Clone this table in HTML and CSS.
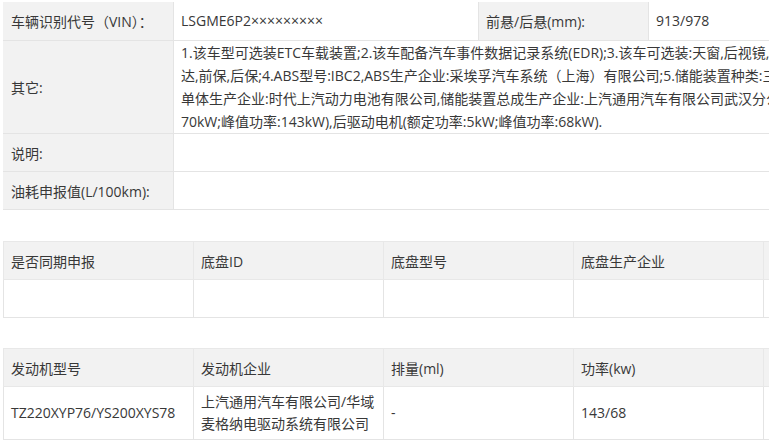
FILE: index.html
```html
<!DOCTYPE html>
<html lang="zh-CN">
<head>
<meta charset="utf-8">
<title>车辆参数</title>
<link rel="stylesheet" href="styles.css">
</head>
<body>
<div class="page">
  <table class="info">
    <colgroup>
      <col class="c-label"><col class="c-val"><col class="c-label"><col class="c-val2">
    </colgroup>
    <tr class="r38">
      <th>车辆识别代号（VIN）：</th>
      <td>LSGME6P2×××××××××</td>
      <th>前悬/后悬(mm):</th>
      <td>913/978</td>
    </tr>
    <tr>
      <th>其它:</th>
      <td colspan="3" class="multi">
        <span class="line">1.该车型可选装ETC车载装置;2.该车配备汽车事件数据记录系统(EDR);3.该车可选装:天窗,后视镜,雷</span>
        <span class="line">达,前保,后保;4.ABS型号:IBC2,ABS生产企业:采埃孚汽车系统（上海）有限公司;5.储能装置种类:三元锂电池</span>
        <span class="line">单体生产企业:时代上汽动力电池有限公司,储能装置总成生产企业:上汽通用汽车有限公司武汉分公司</span>
        <span class="line">70kW;峰值功率:143kW),后驱动电机(额定功率:5kW;峰值功率:68kW).</span>
      </td>
    </tr>
    <tr class="r38">
      <th>说明:</th>
      <td colspan="3"></td>
    </tr>
    <tr class="r38">
      <th>油耗申报值(L/100km):</th>
      <td colspan="3"></td>
    </tr>
  </table>

  <table class="grid chassis">
    <colgroup>
      <col class="gc"><col class="gc"><col class="gc"><col class="gc"><col class="gc">
    </colgroup>
    <tr class="head">
      <th>是否同期申报</th>
      <th>底盘ID</th>
      <th>底盘型号</th>
      <th>底盘生产企业</th>
      <th>企业名称</th>
    </tr>
    <tr class="body-row">
      <td></td><td></td><td></td><td></td><td></td>
    </tr>
  </table>

  <table class="grid engine">
    <colgroup>
      <col class="gc"><col class="gc"><col class="gc"><col class="gc"><col class="gc">
    </colgroup>
    <tr class="head">
      <th>发动机型号</th>
      <th>发动机企业</th>
      <th>排量(ml)</th>
      <th>功率(kw)</th>
      <th>燃料种类</th>
    </tr>
    <tr class="body-row tall">
      <td>TZ220XYP76/YS200XYS78</td>
      <td>上汽通用汽车有限公司/华域麦格纳电驱动系统有限公司</td>
      <td>-</td>
      <td>143/68</td>
      <td>电</td>
    </tr>
  </table>
</div>
</body>
</html>
```

FILE: styles.css
```css
html, body {
  margin: 0;
  padding: 0;
  background: #ffffff;
}

body {
  font-family: "Open Sans", "Noto Sans CJK SC", sans-serif;
  font-size: 14px;
  color: #383838;
}

.page {
  width: 769px;
  height: 440px;
  overflow: hidden;
  padding: 2px 0 0 3px;
  box-sizing: border-box;
}

table {
  border-collapse: collapse;
  table-layout: fixed;
}

th, td {
  border: 1px solid #e4e4e4;
  padding: 0 7px;
  text-align: left;
  font-weight: normal;
  vertical-align: middle;
  overflow: hidden;
  white-space: nowrap;
}

.info {
  width: 950px;
}

.info .c-label { width: 170px; }
.info .c-val { width: 305px; }
.info .c-val2 { width: 305px; }

.info th {
  background: #f2f2f2;
  border-top-color: #f2f2f2;
  border-left-color: #f2f2f2;
}

.info tr:first-child th,
.info tr:first-child td {
  border-top: none;
}

.info .r38 { height: 38px; }

.info .line {
  display: block;
  line-height: 23.2px;
  white-space: nowrap;
}

.grid {
  width: 950px;
  margin-top: 31px;
}

.grid .gc {
  width: 190px;
}

.grid .head {
  height: 38px;
}

.grid .head th {
  background: #f2f2f2;
  border-color: #e8e8e8;
}

.grid .body-row {
  height: 38px;
}

.grid .tall {
  height: 53px;
}

.grid .tall td {
  white-space: normal;
  line-height: 22px;
}

.engine {
  margin-top: 30px;
}
```
